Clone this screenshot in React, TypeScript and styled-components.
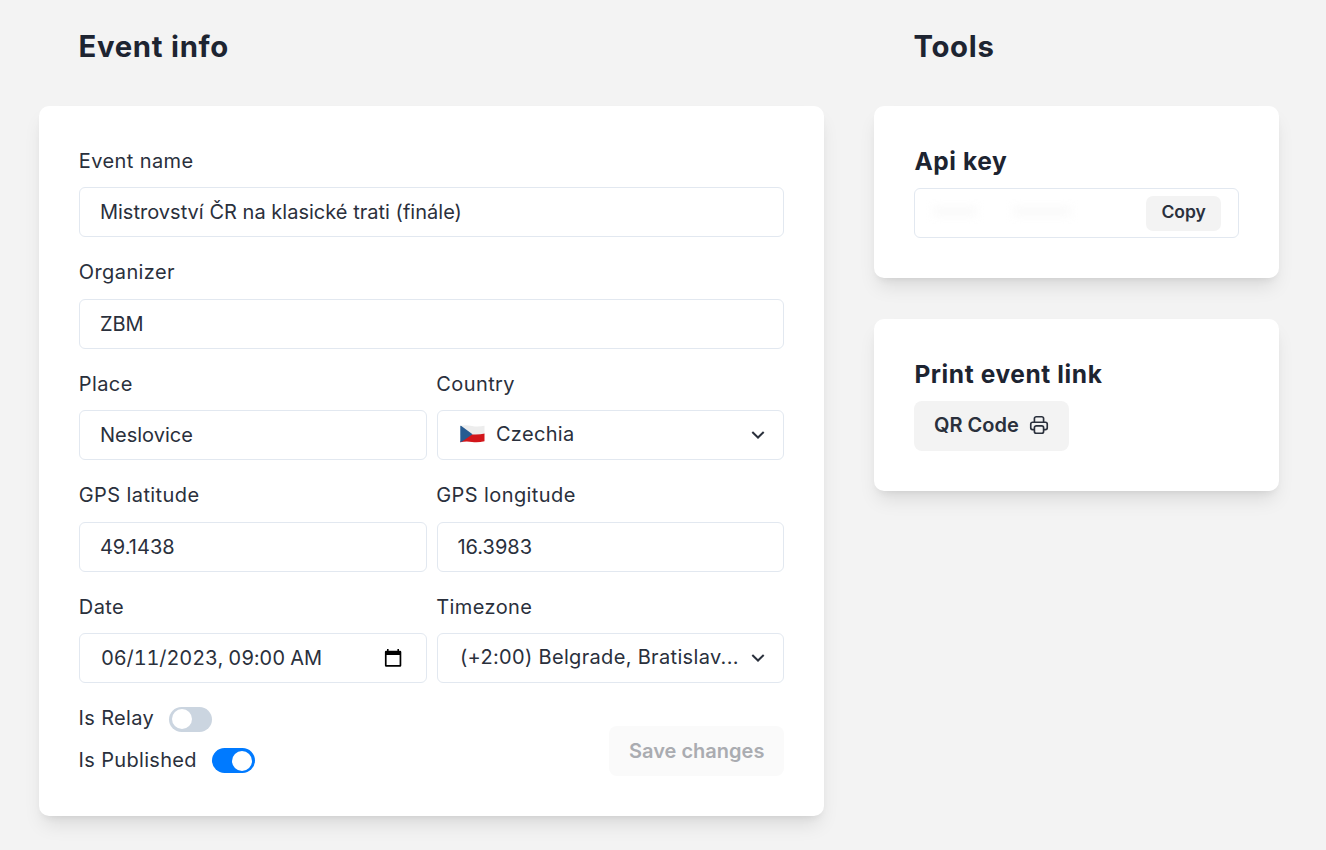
import React from 'react';
import styled, { createGlobalStyle } from 'styled-components';

const GlobalStyle = createGlobalStyle`
  * { box-sizing: border-box; }
  body {
    margin: 0;
    background: #f3f3f3;
    color: #2a303c;
    font-family: Inter, "Liberation Sans", sans-serif;
    font-size: 20px;
    overflow: hidden;
  }
`;

const Page = styled.main`
  display: grid;
  grid-template-columns: 785px 405px;
  column-gap: 50px;
  height: 850px;
  padding: 28px 0 0 39.4px;
`;

const Title = styled.h1`
  margin: 0 0 41px;
  padding: 1px 0 0 39px;
  color: #1d2431;
  font-size: 29.3px;
  font-weight: 700;
  line-height: 36px;
  letter-spacing: 0.73px;
`;

const Card = styled.section<{ $height: number }>`
  height: ${(p) => p.$height}px;
  padding: 40px;
  border-radius: 10px;
  background: #fff;
  box-shadow: 0 12px 19px -4px rgba(0, 0, 0, 0.1), 0 5px 8px -5px rgba(0, 0, 0, 0.1);
`;

const ToolStack = styled.div`
  display: flex;
  flex-direction: column;
  gap: 40.6px;
`;

const FieldGrid = styled.div`
  display: grid;
  grid-template-columns: 1fr 1fr;
  gap: 20px 10px;
`;

const Field = styled.div<{ $wide?: boolean }>`
  grid-column: ${(p) => (p.$wide ? '1 / -1' : 'auto')};
  min-width: 0;
`;

const Label = styled.div`
  height: 41.4px;
  margin-left: -0.6px;
  line-height: 30px;
  letter-spacing: 0.4px;
`;

const Control = styled.div<{ $loose?: boolean }>`
  display: flex;
  align-items: center;
  justify-content: space-between;
  height: 50px;
  padding: 0 18px 0 ${(p) => (p.$loose ? 22 : 19.5)}px;
  border: 1px solid #e2e8f0;
  border-radius: 6px;
  letter-spacing: ${(p) => (p.$loose ? 0.33 : 0.02)}px;
  white-space: nowrap;
`;

const DateControl = styled(Control)`
  padding: 0 23px 0 20.5px;
  font-variant-numeric: tabular-nums;
  letter-spacing: -0.12px;
`;

const SelectValue = styled.span`
  display: flex;
  align-items: center;
  gap: 11px;
  padding-bottom: 2px;
`;

const Footer = styled.div`
  display: flex;
  align-items: flex-end;
  justify-content: space-between;
  margin-top: 20px;
`;

const Toggles = styled.div`
  display: flex;
  flex-direction: column;
  gap: 10.4px;
`;

const ToggleRow = styled.div`
  display: flex;
  align-items: center;
  gap: 15px;
  height: 31px;
  margin-left: -0.8px;
  line-height: 30px;
  letter-spacing: 0.33px;
`;

const Switch = styled.span<{ $on?: boolean }>`
  display: flex;
  justify-content: ${(p) => (p.$on ? 'flex-end' : 'flex-start')};
  width: 42.6px;
  height: 25px;
  margin-top: 2px;
  padding: 2.5px;
  border-radius: 13px;
  background: ${(p) => (p.$on ? '#007aff' : '#cbd5e0')};
`;

const Knob = styled.span`
  width: 20px;
  height: 20px;
  border-radius: 50%;
  background: #fff;
`;

const Button = styled.button<{ $small?: boolean }>`
  display: inline-flex;
  align-items: center;
  gap: 10px;
  height: ${(p) => (p.$small ? 35 : 50)}px;
  padding: 0 ${(p) => (p.$small ? 15 : 20)}px ${(p) => (p.$small ? 3 : 1)}px;
  border: 0;
  border-radius: ${(p) => (p.$small ? 7 : 8)}px;
  background: #f3f3f3;
  color: #2a303c;
  font: 600 ${(p) => (p.$small ? 17.5 : 20)}px Inter, "Liberation Sans", sans-serif;
`;

const SaveButton = styled(Button)`
  margin-bottom: -0.8px;
  padding: 0 20px;
  background: #fafafa;
  color: #aaacb1;
`;

const ToolTitle = styled.h2`
  margin: 0;
  height: 42px;
  color: #1d2431;
  font-size: 24.5px;
  font-weight: 700;
  line-height: 30px;
  letter-spacing: 0.6px;
`;

const KeyBox = styled(Control)`
  align-items: flex-start;
  padding: 6.5px 17.5px 0 18px;
`;

const Redacted = styled.span`
  display: flex;
  gap: 36px;
  padding-top: 11px;
`;

const Smudge = styled.span<{ $width: number }>`
  width: ${(p) => p.$width}px;
  height: 9px;
  background: #f9f9f9;
  filter: blur(5px);
`;

const Flag = () => (
  <svg width="25" height="18" viewBox="0 0 25 18">
    <defs>
      <clipPath id="flag">
        <path d="M.3 .7Q6-.2 12 1t12.500-.3v15.500Q18 18 12 17T.3 17.300Z" />
      </clipPath>
    </defs>
    <g clipPath="url(#flag)">
      <path fill="#ededed" d="M0 0h25v10H0z" />
      <path fill="#d2161b" d="M10 9.200Q18 10.200 25 8.500v10H0v-2z" />
      <path fill="#265b91" d="M0 0l12.500 9.200L0 18z" />
    </g>
  </svg>
);

const Chevron = () => (
  <svg width="14" height="10" viewBox="0 0 14 10" fill="none" stroke="#2a303c" strokeWidth="2">
    <path d="M1.300 2l5.700 5.500L12.700 2" />
  </svg>
);

const Calendar = () => (
  <svg width="20" height="20" viewBox="0 0 20 20" fill="#000">
    <path fillRule="evenodd" d="M4 1h1.600v1.700h8.800V1H16v1.700h1a1.300 1.300 0 0 1 1.300 1.300v13.400a1.300 1.300 0 0 1-1.300 1.300H3.200a1.300 1.300 0 0 1-1.300-1.300V4a1.300 1.300 0 0 1 1.300-1.300H4zM3.600 7v10h13V7z" />
  </svg>
);

const Printer = () => (
  <svg width="22" height="22" viewBox="0 0 24 24" fill="none" stroke="#2a303c" strokeWidth="1.8" strokeLinecap="round" strokeLinejoin="round">
    <path d="M17 17h2a2 2 0 0 0 2-2v-4a2 2 0 0 0-2-2H5a2 2 0 0 0-2 2v4a2 2 0 0 0 2 2h2m2 4h6a2 2 0 0 0 2-2v-4a2 2 0 0 0-2-2H9a2 2 0 0 0-2 2v4a2 2 0 0 0 2 2zm8-12V5a2 2 0 0 0-2-2H9a2 2 0 0 0-2 2v4h10z" />
  </svg>
);

const QrButton = styled(Button)`
  gap: 9.5px;
  padding: 0 19px 1px 19.6px;
`;

function TextField({ label, value, wide }: { label: string; value: string; wide?: boolean }) {
  return (
    <Field $wide={wide}>
      <Label>{label}</Label>
      <Control>{value}</Control>
    </Field>
  );
}

export default function App() {
  return (
    <>
      <GlobalStyle />
      <Page>
        <div>
          <Title>Event info</Title>
          <Card $height={709.6}>
            <FieldGrid>
              <TextField wide label="Event name" value="Mistrovství ČR na klasické trati (finále)" />
              <TextField wide label="Organizer" value="ZBM" />
              <TextField label="Place" value="Neslovice" />
              <Field>
                <Label>Country</Label>
                <Control $loose>
                  <SelectValue><Flag />Czechia</SelectValue>
                  <Chevron />
                </Control>
              </Field>
              <TextField label="GPS latitude" value="49.1438" />
              <TextField label="GPS longitude" value="16.3983" />
              <Field>
                <Label>Date</Label>
                <DateControl>06/11/2023, 09:00 AM<Calendar /></DateControl>
              </Field>
              <Field>
                <Label>Timezone</Label>
                <Control $loose>
                  <SelectValue>(+2:00) Belgrade, Bratislav...</SelectValue>
                  <Chevron />
                </Control>
              </Field>
            </FieldGrid>
            <Footer>
              <Toggles>
                <ToggleRow>Is Relay<Switch><Knob /></Switch></ToggleRow>
                <ToggleRow>Is Published<Switch $on><Knob /></Switch></ToggleRow>
              </Toggles>
              <SaveButton disabled>Save changes</SaveButton>
            </Footer>
          </Card>
        </div>
        <div>
          <Title as="h2">Tools</Title>
          <ToolStack>
            <Card $height={172}>
              <ToolTitle>Api key</ToolTitle>
              <KeyBox>
                <Redacted><Smudge $width={44} /><Smudge $width={58} /></Redacted>
                <Button $small>Copy</Button>
              </KeyBox>
            </Card>
            <Card $height={172}>
              <ToolTitle>Print event link</ToolTitle>
              <QrButton>QR Code<Printer /></QrButton>
            </Card>
          </ToolStack>
        </div>
      </Page>
    </>
  );
}
